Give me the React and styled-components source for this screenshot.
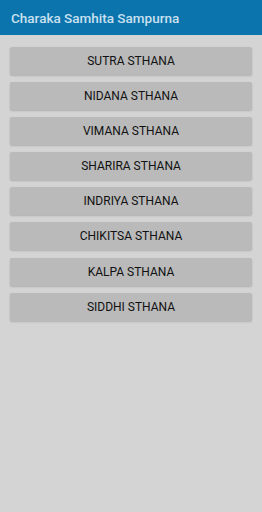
import React from "react";
import styled, { createGlobalStyle } from "styled-components";

const Global = createGlobalStyle`
  html, body { margin: 0; padding: 0; background: #d4d4d4; }
  body { font-family: Roboto, "Noto Sans", sans-serif; }
`;

const Page = styled.div`
  width: 262px;
  height: 512px;
  background: #d4d4d4;
  display: flex;
  flex-direction: column;
`;

const Header = styled.header`
  height: 35px;
  background: #0b74ad;
  display: flex;
  align-items: center;
  padding-left: 11px;
  box-sizing: border-box;
`;

const Title = styled.h1`
  margin: 0;
  font-size: 13.5px;
  font-weight: 500;
  color: #c9e0f0;
`;

const List = styled.div`
  display: flex;
  flex-direction: column;
  gap: 7.1px;
  padding: 12px 10px 0;
`;

const Button = styled.button`
  height: 28px;
  border: none;
  border-radius: 2px;
  background: #bababa;
  box-shadow: 0 1px 2px rgba(0, 0, 0, 0.18);
  font-family: Roboto, sans-serif;
  font-size: 12px;
  color: #111;
  text-transform: uppercase;
  padding: 0;
`;

const items = [
  "Sutra Sthana",
  "Nidana Sthana",
  "Vimana Sthana",
  "Sharira Sthana",
  "Indriya Sthana",
  "Chikitsa Sthana",
  "Kalpa Sthana",
  "Siddhi Sthana",
];

export default function App() {
  return (
    <Page>
      <Global />
      <Header>
        <Title>Charaka Samhita Sampurna</Title>
      </Header>
      <List>
        {items.map((t) => (
          <Button key={t}>{t}</Button>
        ))}
      </List>
    </Page>
  );
}
